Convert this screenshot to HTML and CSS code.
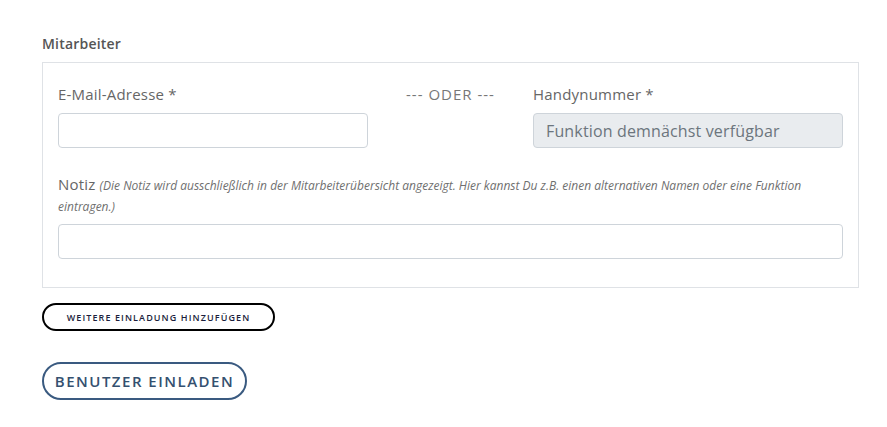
FILE: index.html
```html
<!DOCTYPE html>
<html lang="de">
<head>
    <meta charset="UTF-8">
    <meta name="viewport" content="width=device-width, initial-scale=1.0">
    <title>Benutzer einladen</title>
    <link rel="stylesheet" href="styles.css">
</head>
<body>
    <div class="page">
        <h4 class="section-title">Mitarbeiter</h4>
        <div class="panel">
            <div class="contact-row">
                <div class="field">
                    <label for="email">E-Mail-Adresse *</label>
                    <input type="email" id="email" class="form-control">
                </div>
                <div class="divider">--- ODER ---</div>
                <div class="field">
                    <label for="phone">Handynummer *</label>
                    <input type="text" id="phone" class="form-control" placeholder="Funktion demnächst verfügbar" disabled>
                </div>
            </div>
            <div class="field note-field">
                <label for="note"><span class="note-title">Notiz</span> <small>(Die Notiz wird ausschließlich in der Mitarbeiterübersicht angezeigt. Hier kannst Du z.B. einen alternativen Namen oder eine Funktion eintragen.)</small></label>
                <input type="text" id="note" class="form-control">
            </div>
        </div>

        <button type="button" class="btn btn-small">Weitere Einladung hinzufügen</button>
        <button type="button" class="btn btn-primary">Benutzer einladen</button>
    </div>
</body>
</html>
```

FILE: styles.css
```css
body {
    font-family: 'Open Sans', sans-serif;
    background-color: #fff;
    margin: 0;
    padding: 0;
    color: #666;
}

.page {
    width: 817px;
    padding: 34px 0 0 42px;
}

.section-title {
    font-size: 14px;
    font-weight: 600;
    line-height: 20px;
    letter-spacing: 0.2px;
    color: #555;
    margin: 0 0 8px;
}

.panel {
    border: 1px solid #dfe2e6;
    padding: 19px 15px 28px;
}

.contact-row {
    display: grid;
    grid-template-columns: 310px 1fr 310px;
    column-gap: 15px;
}

.field label {
    display: block;
    font-size: 15px;
    line-height: 24px;
    letter-spacing: 0.2px;
    color: #666;
    margin-bottom: 7px;
}

.divider {
    text-align: center;
    font-size: 15px;
    line-height: 24px;
    letter-spacing: 1px;
    color: #777;
}

.form-control {
    display: block;
    width: 100%;
    height: 35px;
    padding: 0 12px;
    font-family: inherit;
    font-size: 16px;
    letter-spacing: 0.15px;
    color: #495057;
    background-color: #fff;
    border: 1px solid #ced4da;
    border-radius: 4px;
    box-sizing: border-box;
}

.form-control:disabled {
    background-color: #e9ecef;
    opacity: 1;
}

.form-control::placeholder {
    color: #6c757d;
}

.note-field {
    margin-top: 26px;
}

.note-field label {
    line-height: 21px;
    margin-bottom: 8px;
}

.note-field small {
    font-size: 12px;
    font-style: italic;
    line-height: 1;
    letter-spacing: 0;
    color: #6f6f6f;
}

.btn {
    display: block;
    font-family: 'Open Sans', sans-serif;
    text-transform: uppercase;
    background-color: #fff;
    border-radius: 20px;
    cursor: pointer;
    padding: 0;
}

.btn-small {
    width: 233px;
    height: 28px;
    margin-top: 15px;
    border: 2px solid #000;
    font-size: 9px;
    font-weight: 600;
    letter-spacing: 1.1px;
    color: #1b1e3c;
}

.btn-primary {
    width: 205px;
    height: 38px;
    margin-top: 31px;
    border: 2px solid #3a5a80;
    font-size: 15px;
    font-weight: 600;
    letter-spacing: 1.5px;
    color: #34506f;
}
```
